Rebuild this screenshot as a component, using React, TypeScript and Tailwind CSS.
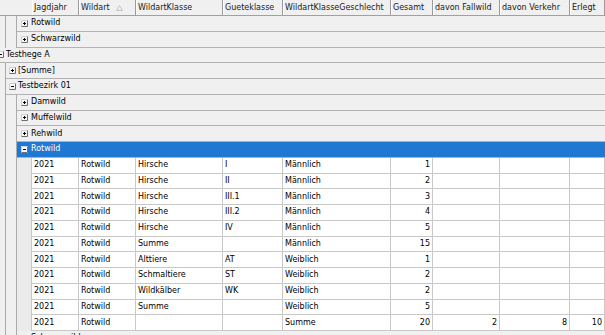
type Col = { title: string; w: string; right?: boolean; sort?: boolean };

const cols: Col[] = [
  { title: "Jagdjahr", w: "w-[47px]" },
  { title: "Wildart", w: "w-[57px]", sort: true },
  { title: "WildartKlasse", w: "w-[87px]" },
  { title: "Gueteklasse", w: "w-[60px]" },
  { title: "WildartKlasseGeschlecht", w: "w-[108px]" },
  { title: "Gesamt", w: "w-[42px]", right: true },
  { title: "davon Fallwild", w: "w-[67px]", right: true },
  { title: "davon Verkehr", w: "w-[70px]", right: true },
  { title: "Erlegt", w: "w-[35px]", right: true },
];

const data: string[][] = [
  ["2021", "Rotwild", "Hirsche", "I", "Männlich", "1", "", "", ""],
  ["2021", "Rotwild", "Hirsche", "II", "Männlich", "2", "", "", ""],
  ["2021", "Rotwild", "Hirsche", "III.1", "Männlich", "3", "", "", ""],
  ["2021", "Rotwild", "Hirsche", "III.2", "Männlich", "4", "", "", ""],
  ["2021", "Rotwild", "Hirsche", "IV", "Männlich", "5", "", "", ""],
  ["2021", "Rotwild", "Summe", "", "Männlich", "15", "", "", ""],
  ["2021", "Rotwild", "Alttiere", "AT", "Weiblich", "1", "", "", ""],
  ["2021", "Rotwild", "Schmaltiere", "ST", "Weiblich", "2", "", "", ""],
  ["2021", "Rotwild", "Wildkälber", "WK", "Weiblich", "2", "", "", ""],
  ["2021", "Rotwild", "Summe", "", "Weiblich", "5", "", "", ""],
  ["2021", "Rotwild", "", "", "Summe", "20", "2", "8", "10"],
];

function ExpandBox({ open, className = "" }: { open: boolean; className?: string }) {
  return (
    <svg width="7" height="7" viewBox="0 0 7 7" className={`shrink-0 ${className}`}>
      <rect x="0" y="0" width="7" height="7" fill="#f7f7f7" />
      <path d="M0.5 6.5V0.5H6.5" stroke="#d0d0d0" fill="none" />
      <path d="M0.5 6.5H6.5V0.5" stroke="#6e6e6e" fill="none" />
      <path d="M2 3.5H5" stroke="#000" />
      {!open && <path d="M3.5 2V5" stroke="#000" />}
    </svg>
  );
}

const IndentA = () => <div className="w-[6px] shrink-0 border-r border-[#ababab] bg-[#f0f0f0]" />;
const IndentB = () => <div className="w-[11px] shrink-0 border-r border-[#ababab] bg-[#f0f0f0]" />;
const IndentC = () => <div className="w-[14px] shrink-0 bg-[#ebebeb]" />;

function GroupRow({
  level,
  label,
  open = false,
  selected = false,
}: {
  level: 0 | 1 | 2;
  label: string;
  open?: boolean;
  selected?: boolean;
}) {
  return (
    <div className="flex h-[15.75px] shrink-0">
      {level >= 1 && <IndentA />}
      {level >= 2 && <IndentB />}
      <div
        className={`flex flex-1 items-center border-b border-[#b3b3b3] ${
          selected ? "bg-[#1f78d1] text-white" : "bg-[#f0f0f0]"
        }`}
      >
        {level === 0 && (
          <>
            <ExpandBox open={open} className="-ml-[3px]" />
            <span className="ml-[2px]">{label}</span>
          </>
        )}
        {level === 1 && (
          <>
            <ExpandBox open={open} className="ml-[3px]" />
            <span className="ml-[2px]">{label}</span>
          </>
        )}
        {level === 2 && (
          <>
            <ExpandBox open={open} className="ml-[4px]" />
            <span className="ml-[3px]">{label}</span>
          </>
        )}
      </div>
    </div>
  );
}

function DataRow({ values }: { values: string[] }) {
  return (
    <div className="flex h-[15.75px] shrink-0">
      <IndentA />
      <IndentB />
      <IndentC />
      <div className="flex flex-1 border-l border-b border-[#c8c8c8] bg-white">
        {cols.map((c, i) => (
          <div
            key={i}
            className={`${c.w} shrink-0 flex items-center px-[2px] border-r border-[#c8c8c8] ${
              c.right ? "justify-end" : ""
            }`}
          >
            {values[i]}
          </div>
        ))}
      </div>
    </div>
  );
}

export default function App() {
  return (
    <div className="w-[605px] h-[335px] overflow-hidden flex flex-col bg-[#f0f0f0] text-black text-[8px] leading-none font-['DejaVu_Sans',Verdana,sans-serif]">
      <div className="flex h-[16px] shrink-0 border-b border-[#a0a0a0] bg-[#f0f0f0]">
        <div className="w-[32px] shrink-0" />
        {cols.map((c, i) => (
          <div
            key={i}
            className={`${c.w} shrink-0 flex items-center pl-[1px] border-l border-l-white border-r border-r-[#9a9a9a] text-[#1a1a1a]`}
          >
            <span>{c.title}</span>
            {c.sort && (
              <svg width="7" height="6" viewBox="0 0 7 6" className="ml-[6px]">
                <path d="M0.5 5.5L3.5 0.5L6.5 5.5Z" fill="none" stroke="#c4c4c4" />
              </svg>
            )}
          </div>
        ))}
      </div>
      <GroupRow level={2} label="Rotwild" />
      <GroupRow level={2} label="Schwarzwild" />
      <GroupRow level={0} label="Testhege A" open />
      <GroupRow level={1} label="[Summe]" />
      <GroupRow level={1} label="Testbezirk 01" open />
      <GroupRow level={2} label="Damwild" />
      <GroupRow level={2} label="Muffelwild" />
      <GroupRow level={2} label="Rehwild" />
      <GroupRow level={2} label="Rotwild" open selected />
      {data.map((r, i) => (
        <DataRow key={i} values={r} />
      ))}
      <GroupRow level={2} label="Schwarzwild" />
    </div>
  );
}
